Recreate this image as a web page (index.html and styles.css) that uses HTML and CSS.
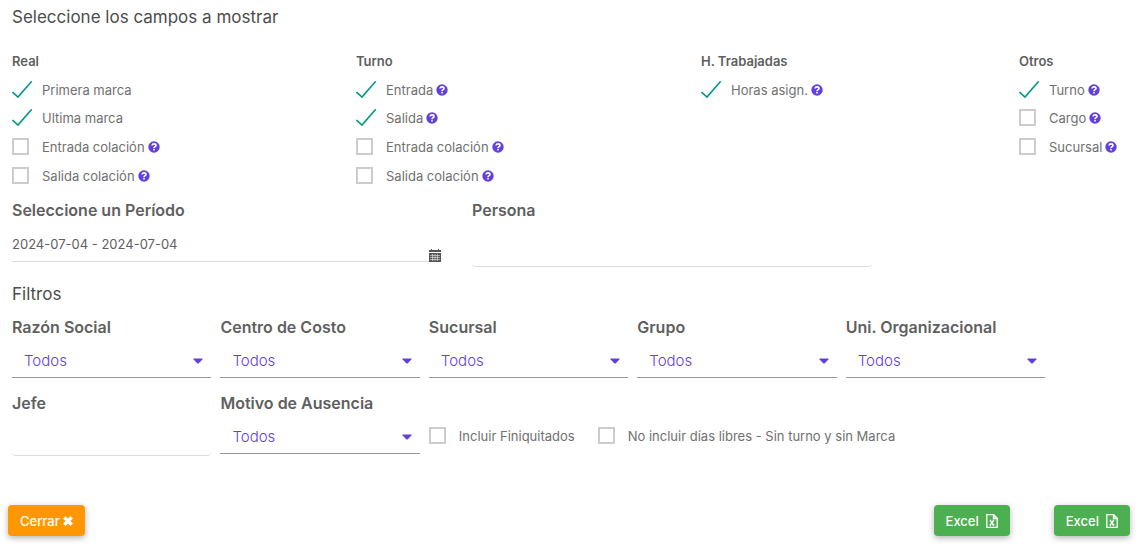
FILE: index.html
```
<!DOCTYPE html>
<html lang="es">
<head>
<meta charset="utf-8">
<meta name="viewport" content="width=device-width, initial-scale=1">
<title>Reporte de asistencia</title>
<link rel="stylesheet" href="styles.css">
</head>
<body>
<svg class="sprite" aria-hidden="true">
  <symbol id="help" viewBox="0 0 12 12"><circle cx="6" cy="6" r="5.7" fill="currentColor"/><path d="M4 4.500C4.200 2.300 8 2.300 8 4.500C8 5.700 6 5.700 6 7.200" fill="none" stroke="#fff" stroke-width="1.600"/><path d="M5.200 8h1.600v1.600H5.200z" fill="#fff"/></symbol>
  <symbol id="caret" viewBox="0 0 10 6"><path d="M1 0.500h8q1 0 .4.900L5.800 5.200q-.8.700-1.600 0L.6 1.400Q0 .5 1 .5z" fill="currentColor"/></symbol>
  <symbol id="excel" viewBox="0 0 12 14"><path d="M1 .7h6.600L11.200 4.300v9H.8V.7zM7.500.8v3.700h3.600M3.700 6.500h1.500M6.600 6.500h1.600M3.500 11h1.600M6.500 11h1.800M4.300 6.500l3.200 4.500M7.500 6.500L4.200 11" fill="none" stroke="currentColor" stroke-width="1.300"/></symbol>
</svg>
<form class="page">
  <h1 class="title">Seleccione los campos a mostrar</h1>
  <div class="fields">
    <section>
      <h2 class="group">Real</h2>
      <ul class="options">
        <li><label class="check"><input type="checkbox" checked>Primera marca</label></li>
        <li><label class="check"><input type="checkbox" checked>Ultima marca</label></li>
        <li><label class="check"><input type="checkbox">Entrada colación</label><svg class="help"><use href="#help"/></svg></li>
        <li><label class="check"><input type="checkbox">Salida colación</label><svg class="help"><use href="#help"/></svg></li>
      </ul>
    </section>
    <section>
      <h2 class="group">Turno</h2>
      <ul class="options">
        <li><label class="check"><input type="checkbox" checked>Entrada</label><svg class="help"><use href="#help"/></svg></li>
        <li><label class="check"><input type="checkbox" checked>Salida</label><svg class="help"><use href="#help"/></svg></li>
        <li><label class="check"><input type="checkbox">Entrada colación</label><svg class="help"><use href="#help"/></svg></li>
        <li><label class="check"><input type="checkbox">Salida colación</label><svg class="help"><use href="#help"/></svg></li>
      </ul>
    </section>
    <section>
      <h2 class="group">H. Trabajadas</h2>
      <ul class="options">
        <li><label class="check"><input type="checkbox" checked>Horas asign.</label><svg class="help"><use href="#help"/></svg></li>
      </ul>
    </section>
    <section>
      <h2 class="group">Otros</h2>
      <ul class="options">
        <li><label class="check"><input type="checkbox" checked>Turno</label><svg class="help"><use href="#help"/></svg></li>
        <li><label class="check"><input type="checkbox">Cargo</label><svg class="help"><use href="#help"/></svg></li>
        <li><label class="check"><input type="checkbox">Sucursal</label><svg class="help"><use href="#help"/></svg></li>
      </ul>
    </section>
  </div>

  <div class="period">
    <div>
      <label class="name" for="periodo">Seleccione un Período</label>
      <div class="date">
        <input class="line date-input" id="periodo" type="text" value="2024-07-04 - 2024-07-04">
        <svg class="calendar" viewBox="0 0 12 13"><path d="M0 1h2V0h1v1h6V0h1v1h2v2H0zM0 4h12v9H0z" fill="#555"/><path d="M1 6.500h10M1 8.500h10M1 10.500h10M3.500 5v7M6 5v7M8.500 5v7" stroke="#fff" stroke-width=".5"/></svg>
      </div>
    </div>
    <div>
      <label class="name" for="persona">Persona</label>
      <input class="line person-input" id="persona" type="text">
    </div>
  </div>

  <h1 class="title filters-title">Filtros</h1>
  <div class="filters">
    <div><label class="name" for="razon">Razón Social</label><div class="picker"><select id="razon"><option>Todos</option></select><svg class="caret"><use href="#caret"/></svg></div></div>
    <div><label class="name" for="centro">Centro de Costo</label><div class="picker"><select id="centro"><option>Todos</option></select><svg class="caret"><use href="#caret"/></svg></div></div>
    <div><label class="name" for="sucursal">Sucursal</label><div class="picker"><select id="sucursal"><option>Todos</option></select><svg class="caret"><use href="#caret"/></svg></div></div>
    <div><label class="name" for="grupo">Grupo</label><div class="picker"><select id="grupo"><option>Todos</option></select><svg class="caret"><use href="#caret"/></svg></div></div>
    <div><label class="name" for="unidad">Uni. Organizacional</label><div class="picker"><select id="unidad"><option>Todos</option></select><svg class="caret"><use href="#caret"/></svg></div></div>
    <div><label class="name" for="jefe">Jefe</label><input class="line chief-input" id="jefe" type="text"></div>
    <div><label class="name" for="motivo">Motivo de Ausencia</label><div class="picker"><select id="motivo"><option>Todos</option></select><svg class="caret"><use href="#caret"/></svg></div></div>
    <div class="extras">
      <label class="check"><input type="checkbox">Incluir Finiquitados</label>
      <label class="check"><input type="checkbox">No incluir días libres - Sin turno y sin Marca</label>
    </div>
  </div>

  <div class="actions">
    <button class="btn close" type="button">Cerrar<svg class="cross" viewBox="0 0 10 10"><path d="M1.300 1.300l7.400 7.400M8.700 1.300l-7.400 7.400" stroke="currentColor" stroke-width="3.400"/></svg></button>
    <button class="btn excel" type="button">Excel<svg class="sheet"><use href="#excel"/></svg></button>
    <button class="btn excel" type="button">Excel<svg class="sheet"><use href="#excel"/></svg></button>
  </div>
</form>
</body>
</html>
```
FILE: styles.css
```
* { box-sizing: border-box; }

body {
  margin: 0;
  background: #fff;
  color: #707070;
  font: 400 13px/20px Inter, "Liberation Sans", sans-serif;
}

.sprite { display: none; }

.page { padding: 4px 12px 12px; }

.title {
  margin: 0;
  color: #4c4c4c;
  font-size: 17px;
  font-weight: 400;
  line-height: 26px;
}

.fields {
  display: grid;
  grid-template-columns: 344fr 345fr 318fr 116fr;
  margin-top: 21px;
}

.group {
  margin: 0;
  color: #5f5f5f;
  font-size: 13px;
  font-weight: 600;
  line-height: 20px;
}

.options {
  margin: 0;
  padding: 5px 0 0;
  list-style: none;
}

.options li {
  display: flex;
  align-items: center;
  gap: 3px;
  height: 29px;
}

.options li:first-child { height: 27px; }

.check {
  display: flex;
  align-items: center;
}

.check input {
  appearance: none;
  flex: none;
  width: 17px;
  height: 17px;
  margin: 0 13px 0 0;
  border: 2px solid #ccc;
}

.check input:checked {
  width: 21px;
  height: 18px;
  margin-right: 9px;
  border: 0;
  background: url("data:image/svg+xml,%3Csvg xmlns='http://www.w3.org/2000/svg' viewBox='0 0 21 18'%3E%3Cpath d='M.5 11L6 16L19.700 .3' fill='none' stroke='%23009688' stroke-width='1.600'/%3E%3C/svg%3E") center / 21px 18px no-repeat;
}

.help {
  width: 12px;
  height: 12px;
  color: #6240df;
}

.name {
  display: block;
  color: #5f5f5f;
  font-size: 16px;
  font-weight: 600;
  line-height: 24px;
}

.line {
  display: block;
  width: 100%;
  padding: 0;
  border: 0;
  border-bottom: 1px solid #ddd;
  background: none;
  color: #606060;
  font: inherit;
  outline: 0;
}

.period {
  display: grid;
  grid-template-columns: 429fr 400fr 232fr;
  gap: 31px;
  margin-top: 8px;
}

.date {
  display: flex;
  align-items: flex-end;
}

.date-input { height: 40px; padding-top: 5px; }

.calendar {
  flex: none;
  width: 12px;
  height: 13px;
}

.person-input { height: 45px; border-radius: 4px; }

.filters-title { margin-top: 14px; }

.filters {
  display: grid;
  grid-template-columns: repeat(5, 1fr);
  gap: 13px 9px;
  width: 92%;
  margin-top: 8px;
}

.picker {
  position: relative;
  border-bottom: 1px solid #999;
}

.picker select {
  appearance: none;
  display: block;
  width: 100%;
  height: 38px;
  padding: 5px 28px 0 12px;
  border: 0;
  background: none;
  color: #6240df;
  font: 300 15px/20px Inter, "Liberation Sans", sans-serif;
}

.caret {
  position: absolute;
  top: 19px;
  right: 8px;
  width: 10px;
  height: 6px;
  color: #6240df;
  pointer-events: none;
}

.chief-input { height: 41px; border-radius: 4px; }

.extras {
  display: flex;
  grid-column: span 3;
  align-items: center;
  gap: 23px;
  padding-top: 24px;
}

.actions {
  display: flex;
  gap: 44px;
  margin: 49px 5px 0 -4px;
}

.btn {
  display: flex;
  align-items: center;
  height: 31px;
  padding: 0 12px;
  border: 0;
  border-radius: 4px;
  color: #fff;
  font: 500 13px/20px Inter, "Liberation Sans", sans-serif;
  box-shadow: 0 2px 6px rgba(0, 0, 0, .3);
}

.close { gap: 3px; margin-right: auto; background: #ff9800; }
.excel { gap: 7px; background: #4caf50; }
.cross { width: 10px; height: 10px; }
.sheet { width: 12px; height: 14px; }
```
